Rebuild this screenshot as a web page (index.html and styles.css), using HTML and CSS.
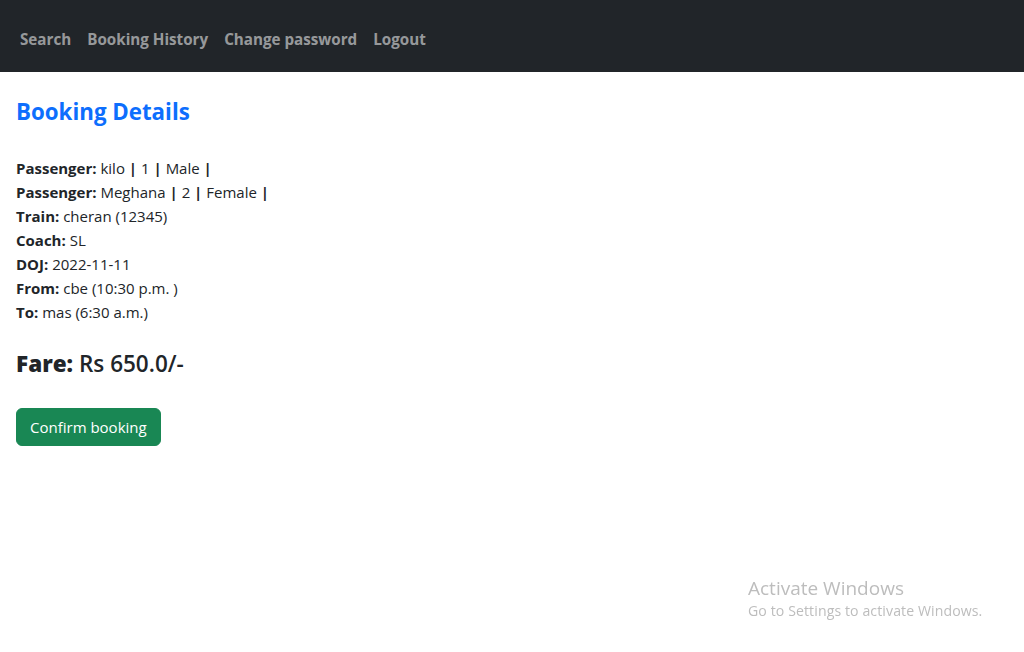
FILE: index.html
```html
<!DOCTYPE html>
<html lang="en">
<head>
    <meta charset="UTF-8">
    <meta name="viewport" content="width=device-width, initial-scale=1.0">
    <title>Booking Details</title>
    <link rel="stylesheet" href="styles.css">
</head>
<body>
    <nav class="navbar">
        <a href="#" class="nav-link">Search</a>
        <a href="#" class="nav-link">Booking History</a>
        <a href="#" class="nav-link">Change password</a>
        <a href="#" class="nav-link">Logout</a>
    </nav>

    <div class="container">
        <h3 class="title">Booking Details</h3>

        <div class="details">
            <div><b>Passenger:</b> kilo <b>|</b> 1 <b>|</b> Male <b>|</b></div>
            <div><b>Passenger:</b> Meghana <b>|</b> 2 <b>|</b> Female <b>|</b></div>
            <div><b>Train:</b> cheran (12345)</div>
            <div><b>Coach:</b> SL</div>
            <div><b>DOJ:</b> 2022-11-11</div>
            <div><b>From:</b> cbe (10:30 p.m. )</div>
            <div><b>To:</b> mas (6:30 a.m.)</div>
        </div>

        <h4 class="fare"><b>Fare:</b> Rs 650.0/-</h4>

        <form>
            <button type="button" class="btn-success">Confirm booking</button>
        </form>
    </div>

    <div class="activate">
        <div class="activate-title">Activate Windows</div>
        <div class="activate-sub">Go to Settings to activate Windows.</div>
    </div>
</body>
</html>
```

FILE: styles.css
```css
body {
    margin: 0;
    font-family: "Open Sans", "Noto Sans", sans-serif;
    font-size: 15px;
    line-height: 24px;
    color: #212529;
    background: #fff;
}

.navbar {
    display: flex;
    align-items: center;
    height: 66px;
    padding: 6px 12px 0;
    background-color: #212529;
}

.nav-link {
    padding: 0 8px;
    font-weight: 700;
    font-size: 15.2px;
    color: rgba(255, 255, 255, 0.55);
    text-decoration: none;
}

.container {
    padding: 0 16px;
}

.title {
    margin: 26px 0 30px;
    font-size: 22.3px;
    line-height: 28px;
    font-weight: 700;
    color: #0d6efd;
}

.details b {
    font-weight: 700;
}

.fare {
    margin: 26px 0 30px;
    font-size: 22.5px;
    line-height: 28px;
    font-weight: 600;
}

.btn-success {
    padding: 6px 13px;
    font-family: inherit;
    font-size: 15px;
    line-height: 24px;
    color: #fff;
    background-color: #198754;
    border: 1px solid #198754;
    border-radius: 6px;
    cursor: pointer;
}

/* OS watermark in the corner */
.activate {
    position: fixed;
    left: 748px;
    top: 576px;
    color: #bdbdbd;
}

.activate-title {
    font-size: 19px;
    line-height: 24px;
}

.activate-sub {
    font-size: 14.1px;
    line-height: 22px;
    letter-spacing: 0.1px;
}
```
